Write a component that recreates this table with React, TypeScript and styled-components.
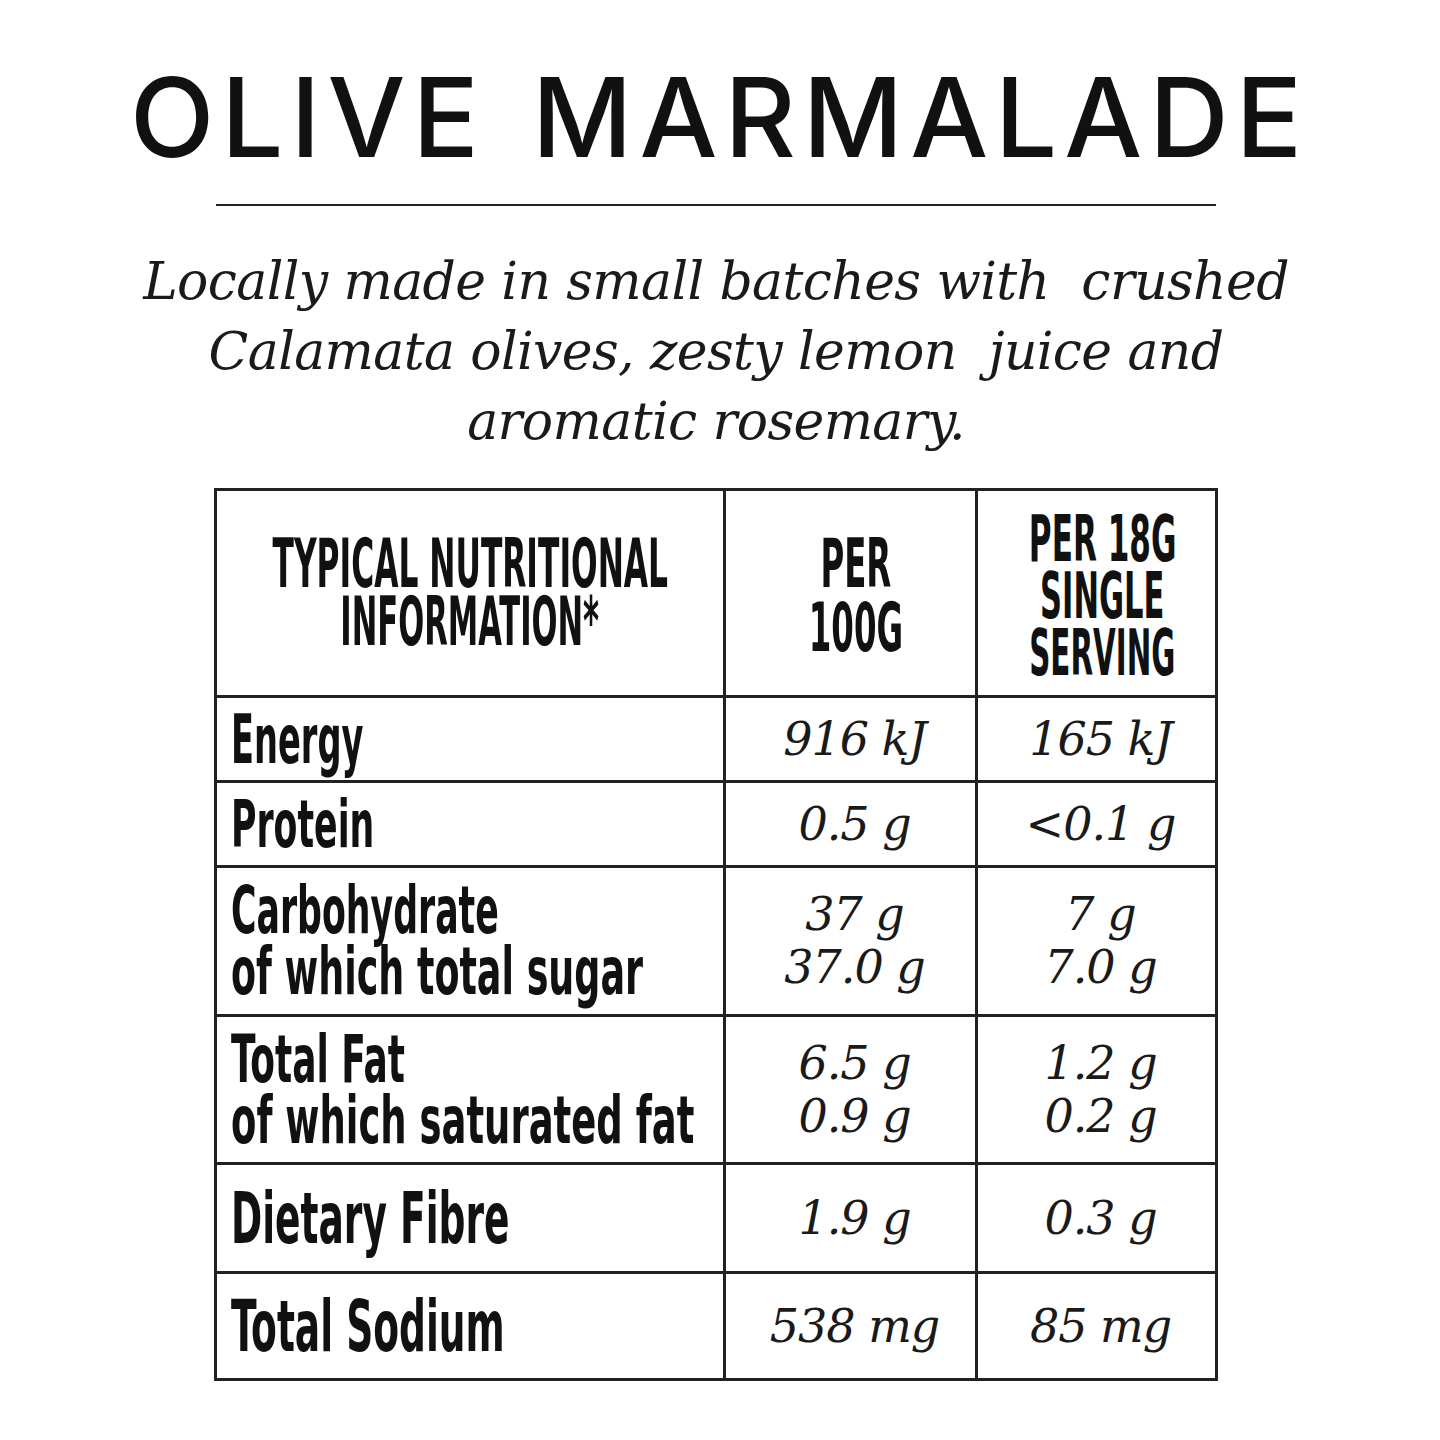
import React from "react";
import styled, { createGlobalStyle } from "styled-components";

const Global = createGlobalStyle`
  html, body { margin: 0; padding: 0; background: #ffffff; }
  body { font-family: "Liberation Sans", Arial, sans-serif; color: #111; }
`;

const Page = styled.main`
  width: 1440px;
  height: 1440px;
  display: flex;
  flex-direction: column;
  align-items: center;
  box-sizing: border-box;
  padding-top: 62px;
  padding-right: 8px;
  background: #fff;
`;

const Title = styled.h1`
  margin: 0;
  font-family: Inter, "Liberation Sans", sans-serif;
  font-weight: 500;
  font-size: 110px;
  line-height: 110px;
  letter-spacing: 7px;
  word-spacing: 10px;
  padding-left: 7px;
  color: #111;
  white-space: nowrap;
`;

const Rule = styled.hr`
  width: 1000px;
  height: 2px;
  margin: 32px 0 0 0;
  border: none;
  background: #222;
`;

const Description = styled.p`
  margin: 40px 0 0 0;
  width: 1240px;
  text-align: center;
  font-family: "DejaVu Serif", "Liberation Serif", serif;
  font-style: italic;
  font-size: 52px;
  line-height: 70px;
  letter-spacing: -0.6px;
  color: #1a1a1a;
`;

const Table = styled.div`
  margin-top: 32px;
  display: grid;
  grid-template-columns: 509px 252px 240px;
  grid-template-rows: 207px 85px 85px 149px 148px 109px 107px;
  border-top: 3px solid #222;
  border-left: 3px solid #222;
  box-sizing: border-box;
`;

const Cell = styled.div<{ $align?: "left" | "center"; $shift?: number }>`
  border-right: 3px solid #222;
  border-bottom: 3px solid #222;
  display: flex;
  flex-direction: column;
  justify-content: center;
  align-items: ${(p) => (p.$align === "left" ? "stretch" : "center")};
  padding-left: ${(p) => (p.$align === "left" ? 14 : p.$shift ?? 0)}px;
  padding-top: ${(p) => (p.$align === "left" ? 0 : (p.$shift ?? 0) / 2)}px;
  box-sizing: border-box;
  min-width: 0;
`;

const Condensed = styled.span<{ $size: number; $lh: number; $sx: number }>`
  font-family: "DejaVu Sans", sans-serif;
  font-stretch: condensed;
  font-weight: 700;
  font-size: ${(p) => p.$size}px;
  line-height: ${(p) => p.$lh}px;
  color: #111;
  white-space: nowrap;
  transform: scaleX(${(p) => p.$sx});
`;

const HeaderText = styled(Condensed)`
  display: block;
  width: max-content;
  text-align: center;
  transform-origin: center center;
`;

const LabelText = styled(Condensed)`
  display: block;
  transform-origin: left center;
`;

const Value = styled.span`
  display: block;
  font-family: "DejaVu Serif", "Liberation Serif", serif;
  font-style: italic;
  font-size: 46px;
  line-height: 53px;
  letter-spacing: -1px;
  color: #1a1a1a;
  white-space: nowrap;
  text-align: center;
  padding-left: 8px;
`;

type Label = { text: string; sx: number };
type Row = { labels: Label[]; per100: string[]; perServe: string[]; size: number };

const rows: Row[] = [
  { labels: [{ text: "Energy", sx: 0.55 }], per100: ["916 kJ"], perServe: ["165 kJ"], size: 68 },
  { labels: [{ text: "Protein", sx: 0.585 }], per100: ["0.5 g"], perServe: ["<0.1 g"], size: 66 },
  {
    labels: [
      { text: "Carbohydrate", sx: 0.585 },
      { text: "of which total sugar", sx: 0.614 },
    ],
    per100: ["37 g", "37.0 g"],
    perServe: ["7 g", "7.0 g"],
    size: 66,
  },
  {
    labels: [
      { text: "Total Fat", sx: 0.615 },
      { text: "of which saturated fat", sx: 0.632 },
    ],
    per100: ["6.5 g", "0.9 g"],
    perServe: ["1.2 g", "0.2 g"],
    size: 65,
  },
  { labels: [{ text: "Dietary Fibre", sx: 0.58 }], per100: ["1.9 g"], perServe: ["0.3 g"], size: 72 },
  { labels: [{ text: "Total Sodium", sx: 0.58 }], per100: ["538 mg"], perServe: ["85 mg"], size: 72 },
];

export default function App() {
  return (
    <>
      <Global />
      <Page>
        <Title>OLIVE MARMALADE</Title>
        <Rule />
        <Description>
          Locally made in small batches with&nbsp; crushed
          <br />
          Calamata olives, zesty lemon&nbsp; juice and
          <br />
          aromatic rosemary.
        </Description>
        <Table>
          <Cell>
            <HeaderText $size={68} $lh={58} $sx={0.512}>TYPICAL NUTRITIONAL</HeaderText>
            <HeaderText $size={68} $lh={58} $sx={0.5}>INFORMATION*</HeaderText>
          </Cell>
          <Cell $shift={10}>
            <HeaderText $size={68} $lh={64} $sx={0.53}>PER</HeaderText>
            <HeaderText $size={68} $lh={64} $sx={0.53}>100G</HeaderText>
          </Cell>
          <Cell $shift={12}>
            <HeaderText $size={64} $lh={57} $sx={0.54}>PER 18G</HeaderText>
            <HeaderText $size={64} $lh={57} $sx={0.53}>SINGLE</HeaderText>
            <HeaderText $size={64} $lh={57} $sx={0.51}>SERVING</HeaderText>
          </Cell>
          {rows.map((r) => (
            <React.Fragment key={r.labels[0].text}>
              <Cell $align="left">
                {r.labels.map((l) => (
                  <LabelText key={l.text} $size={r.size} $lh={61} $sx={l.sx}>
                    {l.text}
                  </LabelText>
                ))}
              </Cell>
              <Cell>
                {r.per100.map((v) => (
                  <Value key={v}>{v}</Value>
                ))}
              </Cell>
              <Cell>
                {r.perServe.map((v) => (
                  <Value key={v}>{v}</Value>
                ))}
              </Cell>
            </React.Fragment>
          ))}
        </Table>
      </Page>
    </>
  );
}
